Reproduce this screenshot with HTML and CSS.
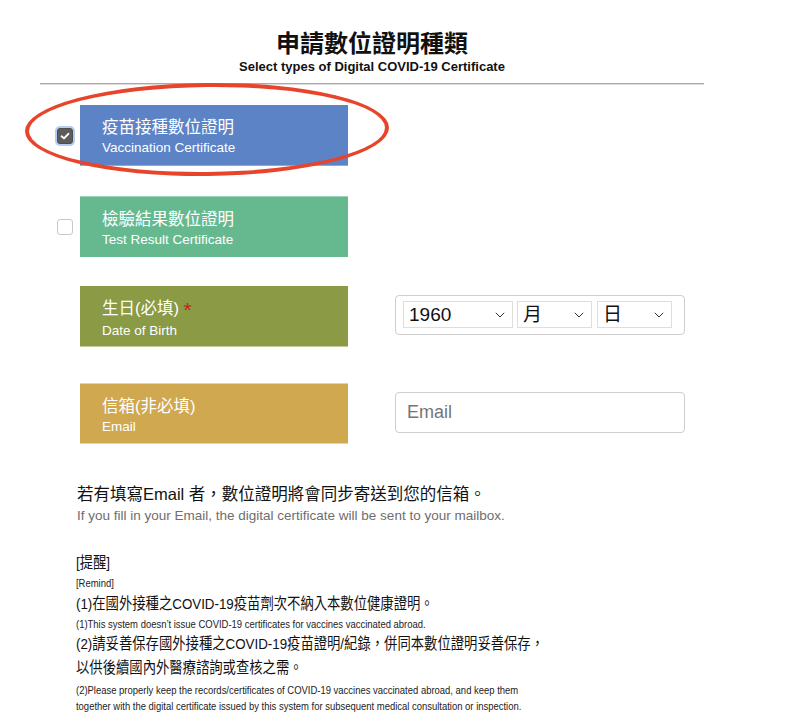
FILE: index.html
```html
<!DOCTYPE html>
<html lang="zh-Hant">
<head>
<meta charset="utf-8">
<title>申請數位證明種類</title>
<link rel="stylesheet" href="styles.css">
</head>
<body>
<div class="page">
  <header class="head">
    <h1 class="title">申請數位證明種類</h1>
    <div class="subtitle">Select types of Digital COVID-19 Certificate</div>
  </header>
  <div class="rule"></div>

  <div class="rows">
    <div class="row row-vacc">
      <div class="check-col"><span class="cb cb-on"><svg viewBox="0 0 16 16" width="16" height="16"><path d="M4.6 8.3 L7 10.4 L11.4 5.8" fill="none" stroke="#fff" stroke-width="1.9" stroke-linecap="round" stroke-linejoin="round"/></svg></span></div>
      <div class="block blue">
        <div class="zh">疫苗接種數位證明</div>
        <div class="en">Vaccination Certificate</div>
      </div>
    </div>

    <div class="row row-test">
      <div class="check-col"><span class="cb"></span></div>
      <div class="block green">
        <div class="zh">檢驗結果數位證明</div>
        <div class="en">Test Result Certificate</div>
      </div>
    </div>

    <div class="row row-dob">
      <div class="check-col"></div>
      <div class="block olive">
        <div class="zh">生日(必填) <span class="req">*</span></div>
        <div class="en">Date of Birth</div>
      </div>
      <div class="field">
        <div class="select-box">
          <div class="sel sel-year"><span class="sel-text">1960</span><svg class="chev" viewBox="0 0 10 6" width="10" height="6"><path d="M0.8 0.8 L5 5 L9.2 0.8" fill="none" stroke="#333" stroke-width="1"/></svg></div>
          <div class="sel sel-small"><span class="sel-text">月</span><svg class="chev" viewBox="0 0 10 6" width="10" height="6"><path d="M0.8 0.8 L5 5 L9.2 0.8" fill="none" stroke="#333" stroke-width="1"/></svg></div>
          <div class="sel sel-small"><span class="sel-text">日</span><svg class="chev" viewBox="0 0 10 6" width="10" height="6"><path d="M0.8 0.8 L5 5 L9.2 0.8" fill="none" stroke="#333" stroke-width="1"/></svg></div>
        </div>
      </div>
    </div>

    <div class="row row-email">
      <div class="check-col"></div>
      <div class="block gold">
        <div class="zh">信箱(非必填)</div>
        <div class="en">Email</div>
      </div>
      <div class="field">
        <div class="email-input"><span class="placeholder">Email</span></div>
      </div>
    </div>

    <div class="annot"></div>
  </div>

  <div class="note">
    <div class="note-zh">若有填寫Email 者，數位證明將會同步寄送到您的信箱。</div>
    <div class="note-en">If you fill in your Email, the digital certificate will be sent to your mailbox.</div>
  </div>

  <div class="remind">
    <div class="r-zh">[提醒]</div>
    <div class="r-en">[Remind]</div>
    <div class="r-zh r-gap">(1)在國外接種之COVID-19疫苗劑次不納入本數位健康證明。</div>
    <div class="r-en">(1)This system doesn’t issue COVID-19 certificates for vaccines vaccinated abroad.</div>
    <div class="r-zh">(2)請妥善保存國外接種之COVID-19疫苗證明/紀錄，併同本數位證明妥善保存，<br>以供後續國內外醫療諮詢或查核之需。</div>
    <div class="r-en r-last">(2)Please properly keep the records/certificates of COVID-19 vaccines vaccinated abroad, and keep them<br>together with the digital certificate issued by this system for subsequent medical consultation or inspection.</div>
  </div>
</div>
</body>
</html>
```

FILE: styles.css
```css
* { box-sizing: border-box; }
html, body { margin: 0; padding: 0; background: #fff; }
body {
  font-family: "Liberation Sans", "Noto Sans CJK TC", sans-serif;
  color: #111;
  width: 800px;
  height: 726px;
  overflow: hidden;
}
.page {
  width: 664px;
  margin-left: 40px;
  padding-top: 26px;
}
.head { text-align: center; }
.title {
  margin: 0;
  font-family: "Noto Sans CJK TC", sans-serif;
  font-size: 24px;
  line-height: 32px;
  font-weight: 700;
  color: #111;
}
.subtitle {
  font-size: 13px;
  line-height: 18px;
  font-weight: 700;
  color: #111;
}
.rule {
  margin-top: 7px;
  height: 2px;
  border-top: 1px solid #a9a9a9;
  border-bottom: 1px solid #dcdcdc;
}
.rows {
  position: relative;
  margin-top: 20px;
  display: flex;
  flex-direction: column;
}
.row {
  display: flex;
  align-items: center;
}
.row-test { margin-top: 30px; }
.row-dob { margin-top: 29px; }
.row-email { margin-top: 36px; }
.check-col {
  width: 40px;
  display: flex;
  justify-content: flex-start;
  padding-left: 17px;
}
.cb {
  width: 16px;
  height: 16px;
  border-radius: 3px;
  border: 1px solid #c8c8c8;
  background: #fff;
  display: block;
}
.cb-on {
  background: #5c5c5c;
  border: 1px solid #4e4e4e;
  box-shadow: 0 0 0 2px #b5ccf4;
  position: relative;
}
.cb-on svg { position: absolute; left: -1px; top: -1px; }
.block {
  width: 268px;
  height: 61px;
  padding: 11px 0 0 22px;
  color: #fff;
}
.blue { background: #5b83c6; border-bottom: 1px solid #8eaad8; }
.green { background: #66b98f; border-top: 1px solid #9fd3b8; }
.olive { background: #8a9a45; border-bottom: 1px solid #c2ca9d; }
.gold { background: #d0a84f; border-top: 1px solid #e9d3a5; border-bottom: 1px solid #e9d3a5; }
.zh {
  font-size: 16.5px;
  line-height: 22px;
  font-family: "Liberation Sans", "Noto Sans CJK TC", sans-serif;
}
.en {
  font-size: 13.5px;
  line-height: 20px;
}
.req { color: #c0271c; font-size: 21px; vertical-align: -3px; }
.field {
  margin-left: 47px;
  width: 290px;
}
.select-box {
  width: 290px;
  height: 40px;
  border: 1px solid #cfcfcf;
  border-radius: 4px;
  display: flex;
  align-items: center;
  padding-left: 7px;
  gap: 4px;
  margin-top: -4px;
}
.sel {
  position: relative;
  height: 27px;
  border: 1px solid #dedede;
  display: flex;
  align-items: center;
  padding-left: 5px;
  font-size: 19px;
  color: #111;
}
.sel-year { width: 110px; }
.sel-small { width: 75px; }
.sel-small + .sel-small { margin-left: 1px; }
.sel-text { font-family: "Liberation Sans", "Noto Sans CJK TC", sans-serif; line-height: 24px; }
.chev { position: absolute; right: 7px; top: 10px; }
.email-input {
  width: 290px;
  height: 41px;
  border: 1px solid #cfcfcf;
  border-radius: 4px;
  display: flex;
  align-items: center;
  padding-left: 11px;
  margin-top: -2px;
}
.placeholder { font-size: 18px; color: #757575; }
.annot {
  position: absolute;
  left: -15px;
  top: -22px;
  width: 364px;
  height: 93px;
  border: 4px solid #e7442c;
  border-radius: 50%;
  transform: rotate(-0.6deg);
  pointer-events: none;
}
.note {
  margin-top: 38px;
  padding-left: 37px;
}
.note-zh { font-size: 16.5px; line-height: 24px; color: #111; }
.note-en { font-size: 13.5px; line-height: 20px; color: #6e6e6e; }
.remind {
  margin-top: 25px;
  margin-left: -1px;
  width: 760px;
  transform: scaleX(0.86);
  transform-origin: left top;
}
.remind .r-zh {
  font-size: 15.5px;
  line-height: 24px;
  color: #111;
  margin-left: 43px;
}
.remind .r-en {
  font-size: 11px;
  line-height: 16px;
  color: #222;
  margin-left: 43px;
}
.r-gap { margin-top: 1px; }
.r-last { margin-top: 2px; }
```
